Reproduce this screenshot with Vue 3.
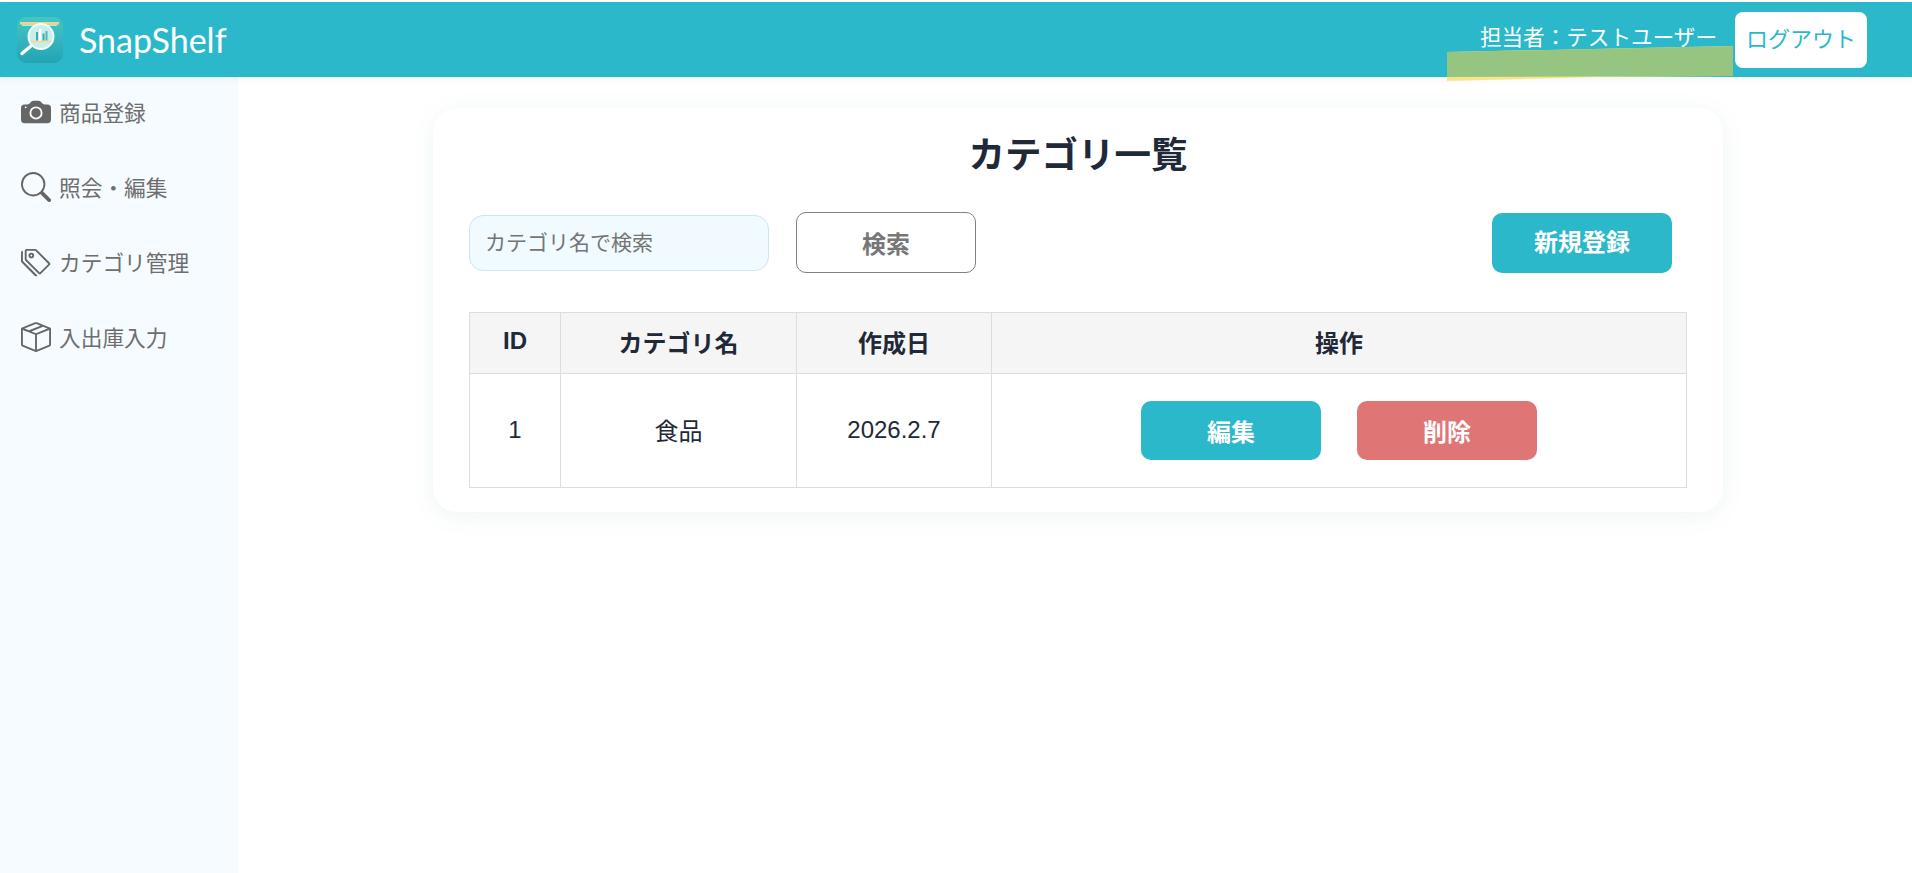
<template>
  <div class="page">
    <header class="topbar">
      <div class="brand">
        <svg class="logo" viewBox="0 0 46 46" width="46" height="46">
          <defs>
            <linearGradient id="logoBg" x1="0" y1="0" x2="0" y2="1">
              <stop offset="0" stop-color="#45c6c4" />
              <stop offset="1" stop-color="#23a4b4" />
            </linearGradient>
          </defs>
          <rect width="46" height="46" rx="9" fill="url(#logoBg)" />
          <rect x="3" y="5" width="39" height="2.6" fill="#f2d488" />
          <rect x="5" y="7.6" width="35" height="1.2" fill="#d8f1ec" />
          <circle cx="24" cy="19.5" r="12.5" fill="#c9efea" stroke="#f3fdfc" stroke-width="2" />
          <rect x="14" y="23.5" width="20" height="2" fill="#f2d9a0" />
          <rect x="19" y="15" width="2" height="8.5" fill="#3ea8b8" />
          <rect x="22" y="11.5" width="2.4" height="12" fill="#fff" />
          <rect x="25.5" y="16.5" width="2" height="7" fill="#3ea8b8" />
          <rect x="28.5" y="14" width="2" height="9.5" fill="#4fb8c0" />
          <line x1="14.5" y1="28.5" x2="5" y2="36.5" stroke="#f6fdfc" stroke-width="3.4" stroke-linecap="round" />
        </svg>
        <span class="brand-name">SnapShelf</span>
      </div>
      <div class="user-area">
        <span class="user-name">担当者：テストユーザー</span>
        <button class="logout">ログアウト</button>
      </div>
    </header>

    <svg class="highlight" width="290" height="40" viewBox="0 0 290 40">
      <polygon points="0,11 286,5 286,35 150,36 0,40" fill="#fbe38c" />
      <polygon points="0,11 286,5 286,35 0,36" fill="#95c580" />
    </svg>

    <div class="body">
      <aside class="sidebar">
        <a v-for="item in menu" :key="item.label" class="menu-item">
          <svg class="menu-icon" viewBox="0 0 16 16" width="30" height="30" fill="#666">
            <path v-for="d in item.paths" :key="d" :d="d" />
          </svg>
          <span>{{ item.label }}</span>
        </a>
      </aside>

      <main class="main">
        <section class="card">
          <h1 class="title">カテゴリ一覧</h1>
          <div class="toolbar">
            <input class="search-input" type="text" placeholder="カテゴリ名で検索" />
            <button class="btn btn-outline">検索</button>
            <button class="btn btn-primary new-btn">新規登録</button>
          </div>
          <table class="list">
            <colgroup>
              <col class="col-id" />
              <col class="col-name" />
              <col class="col-date" />
              <col />
            </colgroup>
            <thead>
              <tr>
                <th>ID</th>
                <th>カテゴリ名</th>
                <th>作成日</th>
                <th>操作</th>
              </tr>
            </thead>
            <tbody>
              <tr v-for="row in rows" :key="row.id">
                <td class="text-cell">{{ row.id }}</td>
                <td class="text-cell">{{ row.name }}</td>
                <td class="text-cell">{{ row.created }}</td>
                <td>
                  <div class="actions">
                    <button class="btn btn-primary">編集</button>
                    <button class="btn btn-danger">削除</button>
                  </div>
                </td>
              </tr>
            </tbody>
          </table>
        </section>
      </main>
    </div>
  </div>
</template>

<script setup>
const menu = [
  {
    label: '商品登録',
    paths: [
      'M10.5 8.5a2.5 2.5 0 1 1-5 0 2.5 2.5 0 0 1 5 0',
      'M2 4a2 2 0 0 0-2 2v6a2 2 0 0 0 2 2h12a2 2 0 0 0 2-2V6a2 2 0 0 0-2-2h-1.172a2 2 0 0 1-1.414-.586l-.828-.828A2 2 0 0 0 9.172 2H6.828a2 2 0 0 0-1.414.586l-.828.828A2 2 0 0 1 3.172 4zm.5 2a.5.5 0 1 1 0-1 .5.5 0 0 1 0 1m9 2.5a3.5 3.5 0 1 1-7 0 3.5 3.5 0 0 1 7 0'
    ]
  },
  {
    label: '照会・編集',
    paths: [
      'M11.742 10.344a6.5 6.5 0 1 0-1.397 1.398h-.001q.044.06.098.115l3.85 3.85a1 1 0 0 0 1.415-1.414l-3.85-3.85a1 1 0 0 0-.115-.1zM12 6.5a5.5 5.5 0 1 1-11 0 5.5 5.5 0 0 1 11 0'
    ]
  },
  {
    label: 'カテゴリ管理',
    paths: [
      'M3 2v4.586l7 7L14.586 9l-7-7zM2 2a1 1 0 0 1 1-1h4.586a1 1 0 0 1 .707.293l7 7a1 1 0 0 1 0 1.414l-4.586 4.586a1 1 0 0 1-1.414 0l-7-7A1 1 0 0 1 2 6.586z',
      'M5.5 5a.5.5 0 1 1 0-1 .5.5 0 0 1 0 1m0 1a1.5 1.5 0 1 0 0-3 1.5 1.5 0 0 0 0 3M1 7.086a1 1 0 0 0 .293.707L8.75 15.25l-.043.043a1 1 0 0 1-1.414 0l-7-7A1 1 0 0 1 0 7.586V3a1 1 0 0 1 1-1z'
    ]
  },
  {
    label: '入出庫入力',
    paths: [
      'M8.186 1.113a.5.5 0 0 0-.372 0L1.846 3.5l2.404.961L10.404 2zm3.564 1.426L5.596 5 8 5.961 14.154 3.5zm3.25 1.7-6.5 2.6v7.922l6.5-2.6V4.24zM7.5 14.762V6.838L1 4.239v7.925zM7.443.184a1.5 1.5 0 0 1 1.114 0l7.129 2.852A.5.5 0 0 1 16 3.5v8.662a1 1 0 0 1-.629.928l-7.185 2.874a.5.5 0 0 1-.372 0L.63 13.09a1 1 0 0 1-.63-.928V3.5a.5.5 0 0 1 .314-.464z'
    ]
  }
]

const rows = [{ id: 1, name: '食品', created: '2026.2.7' }]
</script>

<style>
html,
body {
  margin: 0;
  background: #fff;
}
</style>

<style scoped>
.page {
  position: relative;
  height: 873px;
  padding-top: 2px;
  box-sizing: border-box;
  overflow: hidden;
  display: flex;
  flex-direction: column;
  font-family: "Liberation Sans", "Noto Sans CJK JP", sans-serif;
}

.topbar {
  height: 75px;
  flex: none;
  display: flex;
  align-items: center;
  justify-content: space-between;
  padding: 0 45px 0 17px;
  background: #2bb8cb;
  box-shadow: 0 2px 8px rgba(0, 0, 0, 0.05);
  position: relative;
  z-index: 1;
}

.brand {
  display: flex;
  align-items: center;
  gap: 16px;
}

.logo {
  display: block;
}

.brand-name {
  font-family: "Lato", sans-serif;
  font-size: 34px;
  color: #fff;
  line-height: 1;
}

.user-area {
  display: flex;
  align-items: center;
  gap: 18px;
}

.user-name {
  font-size: 21.6px;
  color: #fff;
  position: relative;
  top: -4px;
}

.logout {
  width: 132px;
  height: 56px;
  border: none;
  border-radius: 8px;
  background: #fff;
  color: #2bb8cb;
  font-family: inherit;
  font-size: 22px;
  padding: 0 0 5px;
}

.highlight {
  position: absolute;
  left: 1447px;
  top: 41px;
  z-index: 2;
}

.body {
  flex: 1;
  display: flex;
  min-height: 0;
}

.sidebar {
  width: 238px;
  flex: none;
  background: #f5fbfe;
}

.menu-item {
  height: 69px;
  margin-bottom: 6px;
  display: flex;
  align-items: center;
  gap: 8px;
  padding-left: 21px;
  font-size: 21.7px;
  color: #6e6e6e;
}

.main {
  flex: 1;
  padding: 31px 0 0 195px;
}

.card {
  width: 1290px;
  height: 404px;
  box-sizing: border-box;
  padding: 0 36px;
  border-radius: 24px;
  background: #fff;
  box-shadow: 0 4px 24px rgba(0, 110, 110, 0.07);
}

.title {
  margin: 0;
  padding-top: 24px;
  text-align: center;
  font-size: 36.5px;
  line-height: 48px;
  font-weight: 700;
  color: #1f2937;
}

.toolbar {
  display: flex;
  align-items: center;
  margin-top: 32px;
}

.search-input {
  width: 300px;
  height: 56px;
  box-sizing: border-box;
  padding: 0 15px;
  border: 1px solid #cfe6ee;
  border-radius: 14px;
  background: #f0faff;
  font-family: inherit;
  font-size: 21px;
  outline: none;
}

.search-input::placeholder {
  color: #757575;
}

.btn {
  width: 180px;
  height: 60px;
  box-sizing: border-box;
  border: none;
  border-radius: 10px;
  padding: 0;
  font-family: inherit;
  font-size: 24px;
  font-weight: 700;
  color: #fff;
}

.btn-outline {
  height: 61px;
  margin-left: 27px;
  padding-bottom: 1px;
  background: #fff;
  border: 1px solid #808080;
  color: #777;
}

.btn-primary {
  background: #2bb8cb;
}

.btn-danger {
  background: #df7575;
}

.new-btn {
  margin-left: auto;
  margin-right: 15px;
  padding-bottom: 4px;
}

.list {
  width: 1218px;
  margin-top: 39px;
  border-collapse: collapse;
  table-layout: fixed;
  color: #1f2937;
  font-size: 24px;
}

.col-id {
  width: 91px;
}

.col-name {
  width: 236px;
}

.col-date {
  width: 195px;
}

.list th,
.list td {
  border: 1px solid #ddd;
  padding: 0;
  text-align: center;
  font-weight: 400;
  box-sizing: border-box;
}

.list th {
  height: 61px;
  padding-bottom: 4px;
  background: #f5f5f5;
  font-weight: 700;
}

.list td {
  height: 114px;
}

.list .text-cell {
  padding-bottom: 2px;
}

.actions {
  display: flex;
  justify-content: center;
  gap: 36px;
}

.actions .btn {
  height: 59px;
}
</style>
